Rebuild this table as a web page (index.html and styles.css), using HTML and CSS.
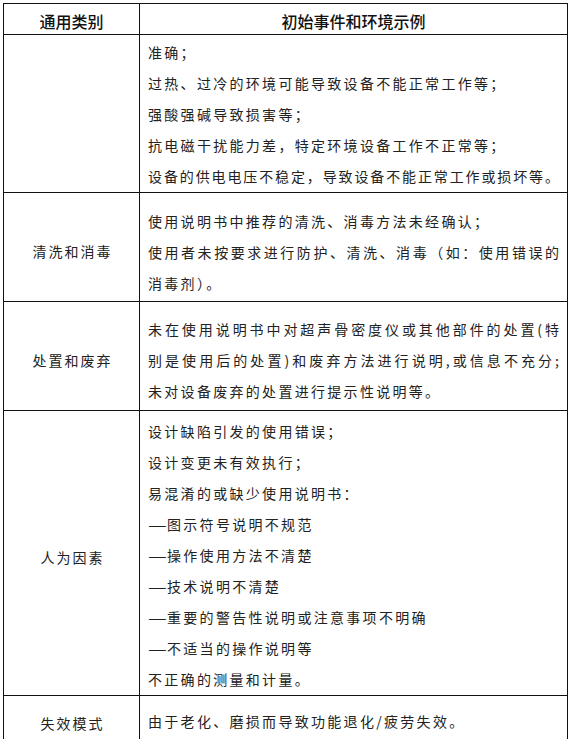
FILE: index.html
```html
<!DOCTYPE html>
<html lang="zh-CN">
<head>
<meta charset="utf-8">
<title>初始事件和环境示例</title>
<link rel="stylesheet" href="styles.css">
</head>
<body>
<table class="tbl">
  <colgroup><col class="c1"><col class="c2"></colgroup>
  <tr class="hd">
    <th>通用类别</th>
    <th>初始事件和环境示例</th>
  </tr>
  <tr class="r1">
    <td class="cat"></td>
    <td class="desc">
      <div>准确；</div>
      <div>过热、过冷的环境可能导致设备不能正常工作等；</div>
      <div>强酸强碱导致损害等；</div>
      <div>抗电磁干扰能力差，特定环境设备工作不正常等；</div>
      <div class="j">设备的供电电压不稳定，导致设备不能正常工作或损坏等。</div>
    </td>
  </tr>
  <tr class="r2">
    <td class="cat">清洗和消毒</td>
    <td class="desc">
      <div>使用说明书中推荐的清洗、消毒方法未经确认；</div>
      <div class="j">使用者未按要求进行防护、清洗、消毒（如：使用错误的</div>
      <div>消毒剂）。</div>
    </td>
  </tr>
  <tr class="r3">
    <td class="cat">处置和废弃</td>
    <td class="desc">
      <div class="j">未在使用说明书中对超声骨密度仪或其他部件的处置(特</div>
      <div class="j">别是使用后的处置)和废弃方法进行说明,或信息不充分;</div>
      <div>未对设备废弃的处置进行提示性说明等。</div>
    </td>
  </tr>
  <tr class="r4">
    <td class="cat">人为因素</td>
    <td class="desc">
      <div>设计缺陷引发的使用错误；</div>
      <div>设计变更未有效执行；</div>
      <div>易混淆的或缺少使用说明书：</div>
      <div><span class="dash">—</span>图示符号说明不规范</div>
      <div><span class="dash">—</span>操作使用方法不清楚</div>
      <div><span class="dash">—</span>技术说明不清楚</div>
      <div><span class="dash">—</span>重要的警告性说明或注意事项不明确</div>
      <div><span class="dash">—</span>不适当的操作说明等</div>
      <div>不正确的测量和计量。</div>
    </td>
  </tr>
  <tr class="r5">
    <td class="cat">失效模式</td>
    <td class="desc">
      <div>由于老化、磨损而导致功能退化/疲劳失效。</div>
    </td>
  </tr>
</table>
</body>
</html>
```

FILE: styles.css
```css
html, body {
  margin: 0;
  padding: 0;
  background: #fff;
}

body {
  font-family: "Noto Sans CJK SC", "Noto Sans", sans-serif;
  color: #222;
}

.tbl {
  border-collapse: collapse;
  margin: 3px 0 0 3px;
  width: 564px;
  table-layout: fixed;
}

.c1 { width: 136px; }
.c2 { width: 428px; }

.tbl th,
.tbl td {
  border: 1px solid #111;
  padding: 0;
}

.tbl .hd th {
  height: 31px;
  font-size: 16px;
  font-weight: 500;
  color: #111;
  line-height: 20px;
  padding-top: 4px;
  box-sizing: border-box;
  vertical-align: middle;
  text-align: center;
}

.tbl .cat {
  text-align: center;
  vertical-align: middle;
  font-size: 14px;
  letter-spacing: 2px;
  padding-top: 8px;
  padding-left: 2px;
  box-sizing: border-box;
}

.tbl .desc {
  vertical-align: top;
  font-size: 14px;
  line-height: 31px;
  letter-spacing: 2.3px;
  padding-left: 8px;
  padding-right: 2px;
  box-sizing: border-box;
  white-space: nowrap;
}

.desc .j {
  text-align: justify;
  text-align-last: justify;
  letter-spacing: 0;
  margin-right: 6px;
}

.dash {
  display: inline-block;
  width: 18px;
  margin-right: 1px;
  letter-spacing: 0;
  transform: scaleX(1.5);
  transform-origin: left center;
}

.tbl .r1 td { height: 156px; }
.tbl .r1 .desc { padding-top: 2px; }

.tbl .r2 td { height: 109px; }
.tbl .r2 .desc { padding-top: 13px; }

.tbl .r3 td { height: 109px; }
.tbl .r3 .desc { padding-top: 12px; }

.tbl .r4 td { height: 281px; }
.tbl .r4 .desc { padding-top: 5px; }

.tbl .r5 td { height: 46px; }
.tbl .r5 .desc { padding-top: 10px; }
```
